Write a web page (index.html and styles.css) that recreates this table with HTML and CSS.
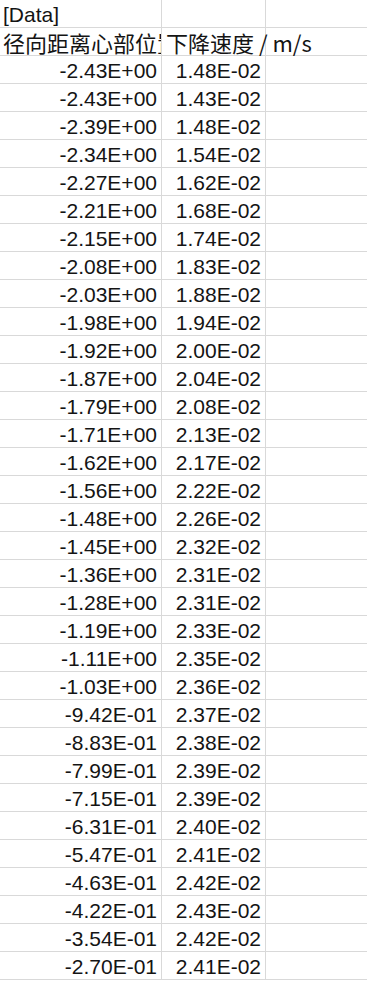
FILE: index.html
```html
<!DOCTYPE html>
<html lang="zh">
<head>
<meta charset="utf-8">
<title>Data</title>
<link rel="stylesheet" href="styles.css">
</head>
<body>
<div class="sheet">
  <div class="row"><div class="cell c1 text">[Data]</div><div class="cell c2"></div><div class="cell c3"></div></div>
  <div class="row"><div class="cell c1 text cjk">径向距离心部位置 / m</div><div class="cell c2 text cjk over">下降速度 / m/s</div><div class="cell c3"></div></div>
  <div class="row"><div class="cell c1 num">-2.43E+00</div><div class="cell c2 num">1.48E-02</div><div class="cell c3"></div></div>
  <div class="row"><div class="cell c1 num">-2.43E+00</div><div class="cell c2 num">1.43E-02</div><div class="cell c3"></div></div>
  <div class="row"><div class="cell c1 num">-2.39E+00</div><div class="cell c2 num">1.48E-02</div><div class="cell c3"></div></div>
  <div class="row"><div class="cell c1 num">-2.34E+00</div><div class="cell c2 num">1.54E-02</div><div class="cell c3"></div></div>
  <div class="row"><div class="cell c1 num">-2.27E+00</div><div class="cell c2 num">1.62E-02</div><div class="cell c3"></div></div>
  <div class="row"><div class="cell c1 num">-2.21E+00</div><div class="cell c2 num">1.68E-02</div><div class="cell c3"></div></div>
  <div class="row"><div class="cell c1 num">-2.15E+00</div><div class="cell c2 num">1.74E-02</div><div class="cell c3"></div></div>
  <div class="row"><div class="cell c1 num">-2.08E+00</div><div class="cell c2 num">1.83E-02</div><div class="cell c3"></div></div>
  <div class="row"><div class="cell c1 num">-2.03E+00</div><div class="cell c2 num">1.88E-02</div><div class="cell c3"></div></div>
  <div class="row"><div class="cell c1 num">-1.98E+00</div><div class="cell c2 num">1.94E-02</div><div class="cell c3"></div></div>
  <div class="row"><div class="cell c1 num">-1.92E+00</div><div class="cell c2 num">2.00E-02</div><div class="cell c3"></div></div>
  <div class="row"><div class="cell c1 num">-1.87E+00</div><div class="cell c2 num">2.04E-02</div><div class="cell c3"></div></div>
  <div class="row"><div class="cell c1 num">-1.79E+00</div><div class="cell c2 num">2.08E-02</div><div class="cell c3"></div></div>
  <div class="row"><div class="cell c1 num">-1.71E+00</div><div class="cell c2 num">2.13E-02</div><div class="cell c3"></div></div>
  <div class="row"><div class="cell c1 num">-1.62E+00</div><div class="cell c2 num">2.17E-02</div><div class="cell c3"></div></div>
  <div class="row"><div class="cell c1 num">-1.56E+00</div><div class="cell c2 num">2.22E-02</div><div class="cell c3"></div></div>
  <div class="row"><div class="cell c1 num">-1.48E+00</div><div class="cell c2 num">2.26E-02</div><div class="cell c3"></div></div>
  <div class="row"><div class="cell c1 num">-1.45E+00</div><div class="cell c2 num">2.32E-02</div><div class="cell c3"></div></div>
  <div class="row"><div class="cell c1 num">-1.36E+00</div><div class="cell c2 num">2.31E-02</div><div class="cell c3"></div></div>
  <div class="row"><div class="cell c1 num">-1.28E+00</div><div class="cell c2 num">2.31E-02</div><div class="cell c3"></div></div>
  <div class="row"><div class="cell c1 num">-1.19E+00</div><div class="cell c2 num">2.33E-02</div><div class="cell c3"></div></div>
  <div class="row"><div class="cell c1 num">-1.11E+00</div><div class="cell c2 num">2.35E-02</div><div class="cell c3"></div></div>
  <div class="row"><div class="cell c1 num">-1.03E+00</div><div class="cell c2 num">2.36E-02</div><div class="cell c3"></div></div>
  <div class="row"><div class="cell c1 num">-9.42E-01</div><div class="cell c2 num">2.37E-02</div><div class="cell c3"></div></div>
  <div class="row"><div class="cell c1 num">-8.83E-01</div><div class="cell c2 num">2.38E-02</div><div class="cell c3"></div></div>
  <div class="row"><div class="cell c1 num">-7.99E-01</div><div class="cell c2 num">2.39E-02</div><div class="cell c3"></div></div>
  <div class="row"><div class="cell c1 num">-7.15E-01</div><div class="cell c2 num">2.39E-02</div><div class="cell c3"></div></div>
  <div class="row"><div class="cell c1 num">-6.31E-01</div><div class="cell c2 num">2.40E-02</div><div class="cell c3"></div></div>
  <div class="row"><div class="cell c1 num">-5.47E-01</div><div class="cell c2 num">2.41E-02</div><div class="cell c3"></div></div>
  <div class="row"><div class="cell c1 num">-4.63E-01</div><div class="cell c2 num">2.42E-02</div><div class="cell c3"></div></div>
  <div class="row"><div class="cell c1 num">-4.22E-01</div><div class="cell c2 num">2.43E-02</div><div class="cell c3"></div></div>
  <div class="row"><div class="cell c1 num">-3.54E-01</div><div class="cell c2 num">2.42E-02</div><div class="cell c3"></div></div>
  <div class="row"><div class="cell c1 num">-2.70E-01</div><div class="cell c2 num">2.41E-02</div><div class="cell c3"></div></div>
</div>
</body>
</html>
```

FILE: styles.css
```css
html, body {
  margin: 0;
  padding: 0;
  background: #ffffff;
}

body {
  width: 367px;
  height: 985px;
  overflow: hidden;
  font-family: "Liberation Sans", "Noto Sans CJK SC", sans-serif;
  font-size: 21px;
  color: #141414;
}

.sheet {
  display: flex;
  flex-direction: column;
}

.row {
  display: grid;
  grid-template-columns: 162px 104px 1fr;
  height: 28px;
  box-sizing: border-box;
  border-bottom: 1px solid #d9d9d9;
}

.cell {
  display: flex;
  align-items: flex-end;
  line-height: 24px;
  white-space: nowrap;
  box-sizing: border-box;
  min-width: 0;
}

.c1, .c2 {
  border-right: 1px solid #d9d9d9;
}

.c1 {
  overflow: hidden;
}

.num {
  justify-content: flex-end;
  padding-right: 4px;
}

.text {
  padding-left: 3px;
}

.c2.text {
  padding-left: 4px;
}

.cjk {
  font-family: "Noto Sans CJK SC", "Liberation Sans", sans-serif;
  font-size: 22px;
  line-height: 26px;
}

.over {
  overflow: visible;
  position: relative;
  z-index: 1;
}
```
